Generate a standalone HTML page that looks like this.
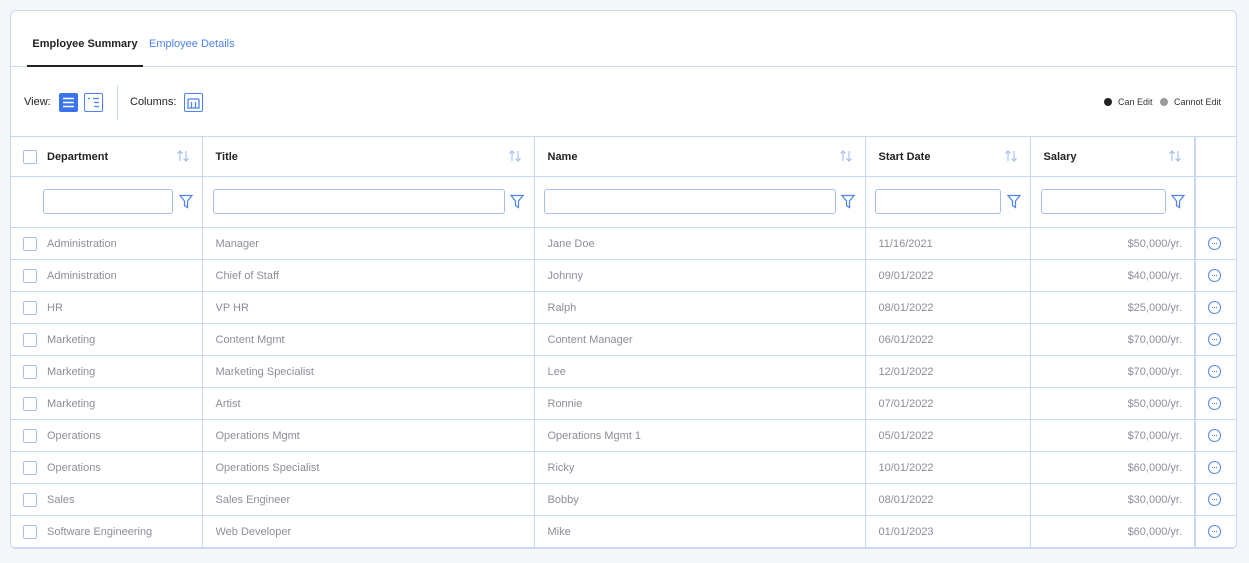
<!DOCTYPE html><html><head><style>
*{box-sizing:border-box;margin:0;padding:0}
body{width:1249px;height:563px;background:#f6f7fb;font-family:"Liberation Sans",sans-serif;position:relative;overflow:hidden}
.card{position:absolute;left:10px;top:10px;width:1227px;height:539px;background:#fff;border:1px solid #c8d7f5;border-radius:6px;overflow:hidden}
.tabs{position:absolute;left:0;top:0;width:100%;height:56px;border-bottom:1px solid #c8d7f5}
.t1{position:absolute;left:16px;top:27px;width:116px;height:29px;font-size:11px;font-weight:bold;color:#222;text-align:center;border-bottom:2px solid #222}
.t2{position:absolute;left:138px;top:27px;font-size:11px;color:#4d84f0}
.tb{position:absolute;left:0;top:56px;height:70px;width:100%}
.lab{position:absolute;font-size:11px;color:#222;top:29px}
.ic{position:absolute;top:26px;width:19px;height:19px;border:1px solid #4d84f0;border-radius:2px}
.leg{position:absolute;top:30px;font-size:9px;color:#333}
.dot{display:inline-block;width:8px;height:8px;border-radius:50%;vertical-align:-1px;margin-right:6px}
table{position:absolute;left:0;top:125px;border-collapse:collapse;table-layout:fixed}
td{border:1px solid #c8d7f5;font-size:11px;color:#8e8e98;padding:0 0 0 13px;height:32px;position:relative}
tr td:first-child{border-left:none}
tr td:last-child{border-right:none}
tr.h td{height:40px;color:#222;font-weight:bold}
tr.f td{height:51px}
td.r{text-align:right;padding-right:12px}
.cb{display:inline-block;width:14px;height:14px;border:1px solid #a9c0ee;border-radius:2px;vertical-align:middle;margin-right:10px;margin-left:-1px}
.inp{position:absolute;top:12px;height:25px;border:1px solid #a9c0ee;border-radius:3px}
.sort{position:absolute;right:12px;top:12px}
.fil{position:absolute;top:17px}
.dash{position:absolute;left:12px;top:9px;width:13px;height:13px;border:1px solid #4d84f0;border-radius:50%}
.dash:after{content:"";position:absolute;left:3px;top:5px;width:5px;height:0;border-top:1px dotted #4d84f0}
td.last{border-left:2px solid #c8d7f5}
</style></head><body>
<div class="card">
<div class="tabs"><div class="t1">Employee Summary</div><div class="t2">Employee Details</div></div>
<div class="tb">
<div class="lab" style="left:13px">View:</div>
<div class="ic" style="left:48px;background:#3b75ee;border-color:#3b75ee"><svg width="17" height="17"><path d="M3 4.5h11M3 8.5h11M3 12.5h11" stroke="#fff" stroke-width="1.6"/></svg></div>
<div class="ic" style="left:73px"><svg width="17" height="17"><path d="M3 4.5h2M8 4.5h6M9 8.5h5M9 12.5h5" stroke="#4d84f0" stroke-width="1.2"/></svg></div>
<div style="position:absolute;left:106px;top:18px;width:1px;height:35px;background:#c8d7f5"></div>
<div class="lab" style="left:119px">Columns:</div>
<div class="ic" style="left:173px"><svg width="17" height="17"><path d="M3 5h11M3 5v9h11V5M6.5 8v6M10.5 8v6" stroke="#4d84f0" stroke-width="1.3" fill="none"/></svg></div>
<div class="leg" style="left:1093px"><span class="dot" style="background:#222"></span>Can Edit</div>
<div class="leg" style="left:1149px"><span class="dot" style="background:#999"></span>Cannot Edit</div>
</div>
<table>
<colgroup><col style="width:191px"><col style="width:332px"><col style="width:331px"><col style="width:165px"><col style="width:165px"><col style="width:41px"></colgroup>
<tr class="h">
<td><span class="cb"></span>Department<svg class="sort" width="14" height="14"><path d="M4 12V2M1.5 4.5L4 2l2.5 2.5M10 2v10M7.5 9.5L10 12l2.5-2.5" stroke="#9ab6ef" fill="none"/></svg></td>
<td>Title<svg class="sort" width="14" height="14"><path d="M4 12V2M1.5 4.5L4 2l2.5 2.5M10 2v10M7.5 9.5L10 12l2.5-2.5" stroke="#9ab6ef" fill="none"/></svg></td>
<td>Name<svg class="sort" width="14" height="14"><path d="M4 12V2M1.5 4.5L4 2l2.5 2.5M10 2v10M7.5 9.5L10 12l2.5-2.5" stroke="#9ab6ef" fill="none"/></svg></td>
<td>Start Date<svg class="sort" width="14" height="14"><path d="M4 12V2M1.5 4.5L4 2l2.5 2.5M10 2v10M7.5 9.5L10 12l2.5-2.5" stroke="#9ab6ef" fill="none"/></svg></td>
<td>Salary<svg class="sort" width="14" height="14"><path d="M4 12V2M1.5 4.5L4 2l2.5 2.5M10 2v10M7.5 9.5L10 12l2.5-2.5" stroke="#9ab6ef" fill="none"/></svg></td>
<td class="last"></td></tr>
<tr class="f">
<td><div class="inp" style="left:32px;width:130px"></div><svg class="fil" style="left:168px" width="14" height="15"><path d="M1 1.5h12L8.5 7v6.5l-3-2V7z" stroke="#4d84f0" fill="none" stroke-width="1.2"/></svg></td>
<td><div class="inp" style="left:10px;width:292px"></div><svg class="fil" style="left:307px" width="14" height="15"><path d="M1 1.5h12L8.5 7v6.5l-3-2V7z" stroke="#4d84f0" fill="none" stroke-width="1.2"/></svg></td>
<td><div class="inp" style="left:9px;width:292px"></div><svg class="fil" style="left:306px" width="14" height="15"><path d="M1 1.5h12L8.5 7v6.5l-3-2V7z" stroke="#4d84f0" fill="none" stroke-width="1.2"/></svg></td>
<td><div class="inp" style="left:9px;width:126px"></div><svg class="fil" style="left:141px" width="14" height="15"><path d="M1 1.5h12L8.5 7v6.5l-3-2V7z" stroke="#4d84f0" fill="none" stroke-width="1.2"/></svg></td>
<td><div class="inp" style="left:10px;width:125px"></div><svg class="fil" style="left:140px" width="14" height="15"><path d="M1 1.5h12L8.5 7v6.5l-3-2V7z" stroke="#4d84f0" fill="none" stroke-width="1.2"/></svg></td>
<td class="last"></td></tr>
<tr><td><span class="cb"></span>Administration</td><td>Manager</td><td>Jane Doe</td><td>11/16/2021</td><td class="r">$50,000/yr.</td><td class="last"><span class="dash"></span></td></tr>
<tr><td><span class="cb"></span>Administration</td><td>Chief of Staff</td><td>Johnny</td><td>09/01/2022</td><td class="r">$40,000/yr.</td><td class="last"><span class="dash"></span></td></tr>
<tr><td><span class="cb"></span>HR</td><td>VP HR</td><td>Ralph</td><td>08/01/2022</td><td class="r">$25,000/yr.</td><td class="last"><span class="dash"></span></td></tr>
<tr><td><span class="cb"></span>Marketing</td><td>Content Mgmt</td><td>Content Manager</td><td>06/01/2022</td><td class="r">$70,000/yr.</td><td class="last"><span class="dash"></span></td></tr>
<tr><td><span class="cb"></span>Marketing</td><td>Marketing Specialist</td><td>Lee</td><td>12/01/2022</td><td class="r">$70,000/yr.</td><td class="last"><span class="dash"></span></td></tr>
<tr><td><span class="cb"></span>Marketing</td><td>Artist</td><td>Ronnie</td><td>07/01/2022</td><td class="r">$50,000/yr.</td><td class="last"><span class="dash"></span></td></tr>
<tr><td><span class="cb"></span>Operations</td><td>Operations Mgmt</td><td>Operations Mgmt 1</td><td>05/01/2022</td><td class="r">$70,000/yr.</td><td class="last"><span class="dash"></span></td></tr>
<tr><td><span class="cb"></span>Operations</td><td>Operations Specialist</td><td>Ricky</td><td>10/01/2022</td><td class="r">$60,000/yr.</td><td class="last"><span class="dash"></span></td></tr>
<tr><td><span class="cb"></span>Sales</td><td>Sales Engineer</td><td>Bobby</td><td>08/01/2022</td><td class="r">$30,000/yr.</td><td class="last"><span class="dash"></span></td></tr>
<tr><td><span class="cb"></span>Software Engineering</td><td>Web Developer</td><td>Mike</td><td>01/01/2023</td><td class="r">$60,000/yr.</td><td class="last"><span class="dash"></span></td></tr>
</table>
</div>
</body></html>
